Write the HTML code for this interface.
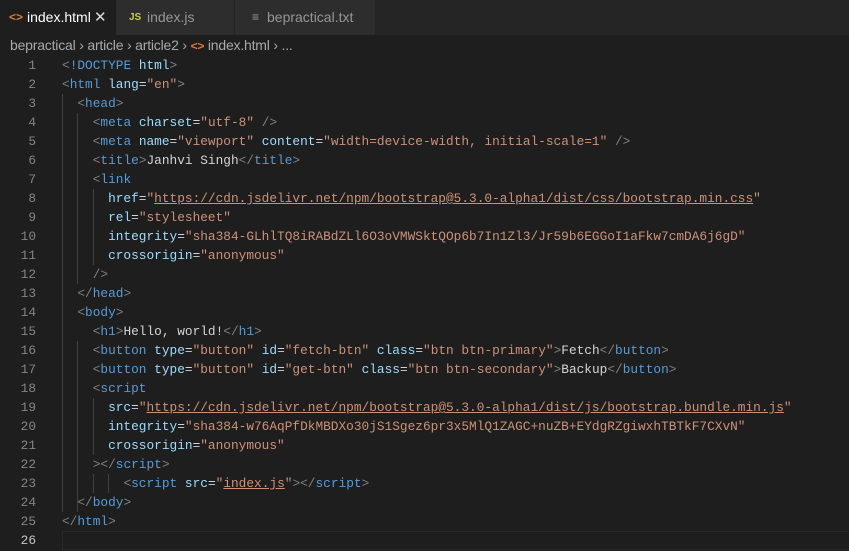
<!DOCTYPE html>
<html><head><style>
body{margin:0;width:849px;height:551px;background:#1e1e1e;overflow:hidden;font-family:"Liberation Sans",sans-serif;position:relative}
.tabs{position:absolute;left:0;top:0;width:849px;height:35px;background:#252526}
.tab{position:absolute;top:0;height:35px;line-height:35px;font-size:14px;color:#969696;background:#2d2d2d}
.bc{position:absolute;top:35px;left:10px;font-size:14px;color:#a9a9a9;line-height:20px;letter-spacing:-0.2px}
.code{position:absolute;left:0;top:56px;font-family:"Liberation Mono",monospace;font-size:12.8px}
.ln{position:absolute;left:0;width:36px;text-align:right;color:#858585;height:19px;line-height:19px}
.l{position:absolute;left:62px;white-space:pre;color:#d4d4d4;height:19px;line-height:19px}
.b{color:#808080}.t{color:#569cd6}.a{color:#9cdcfe}.s{color:#ce9178}.u{text-decoration:underline;text-decoration-color:#ce9178}
.g{position:absolute;width:1px;background:#404040}
</style></head><body>
<div class="tabs">
<div class="tab" style="left:0;width:116px;background:#1e1e1e;color:#fff"><span style="color:#e37933;position:absolute;left:9px;font-weight:bold;font-size:12px">&lt;&gt;</span><span style="position:absolute;left:27px">index.html</span><span style="position:absolute;left:94px;font-size:15px;color:#ddd">✕</span></div>
<div class="tab" style="left:116px;width:118px"><span style="color:#cbcb41;position:absolute;left:13px;font-weight:bold;font-size:10px">JS</span><span style="position:absolute;left:31px">index.js</span></div>
<div class="tab" style="left:235px;width:140px"><span style="color:#9a9a9a;position:absolute;left:17px;font-size:12px">≡</span><span style="position:absolute;left:32px">bepractical.txt</span></div>
</div>
<div class="bc">bepractical <span>›</span> article <span>›</span> article2 <span>›</span> <span style="color:#e37933;font-weight:bold;font-size:12px">&lt;&gt;</span> index.html <span>›</span> ...</div>
<div class="code">
<div style="position:absolute;left:62px;top:475px;width:787px;height:17px;border:1px solid #282828"></div>
<div class="g" style="left:62px;top:38px;height:418px"></div>
<div class="g" style="left:77px;top:57px;height:171px"></div>
<div class="g" style="left:77px;top:285px;height:171px"></div>
<div class="g" style="left:93px;top:133px;height:76px"></div>
<div class="g" style="left:93px;top:342px;height:57px"></div>
<div class="g" style="left:93px;top:418px;height:19px"></div>
<div class="g" style="left:108px;top:418px;height:19px"></div>
<div class="ln" style="top:0">1</div><div class="l" style="top:0"><span class="b">&lt;</span><span class="t">!DOCTYPE</span> <span class="a">html</span><span class="b">&gt;</span></div>
<div class="ln" style="top:19px">2</div><div class="l" style="top:19px"><span class="b">&lt;</span><span class="t">html</span> <span class="a">lang</span>=<span class="s">"en"</span><span class="b">&gt;</span></div>
<div class="ln" style="top:38px">3</div><div class="l" style="top:38px">  <span class="b">&lt;</span><span class="t">head</span><span class="b">&gt;</span></div>
<div class="ln" style="top:57px">4</div><div class="l" style="top:57px">    <span class="b">&lt;</span><span class="t">meta</span> <span class="a">charset</span>=<span class="s">"utf-8"</span> <span class="b">/&gt;</span></div>
<div class="ln" style="top:76px">5</div><div class="l" style="top:76px">    <span class="b">&lt;</span><span class="t">meta</span> <span class="a">name</span>=<span class="s">"viewport"</span> <span class="a">content</span>=<span class="s">"width=device-width, initial-scale=1"</span> <span class="b">/&gt;</span></div>
<div class="ln" style="top:95px">6</div><div class="l" style="top:95px">    <span class="b">&lt;</span><span class="t">title</span><span class="b">&gt;</span>Janhvi Singh<span class="b">&lt;/</span><span class="t">title</span><span class="b">&gt;</span></div>
<div class="ln" style="top:114px">7</div><div class="l" style="top:114px">    <span class="b">&lt;</span><span class="t">link</span></div>
<div class="ln" style="top:133px">8</div><div class="l" style="top:133px">      <span class="a">href</span>=<span class="s">"<span class="u">https://cdn.jsdelivr.net/npm/bootstrap@5.3.0-alpha1/dist/css/bootstrap.min.css</span>"</span></div>
<div class="ln" style="top:152px">9</div><div class="l" style="top:152px">      <span class="a">rel</span>=<span class="s">"stylesheet"</span></div>
<div class="ln" style="top:171px">10</div><div class="l" style="top:171px">      <span class="a">integrity</span>=<span class="s">"sha384-GLhlTQ8iRABdZLl6O3oVMWSktQOp6b7In1Zl3/Jr59b6EGGoI1aFkw7cmDA6j6gD"</span></div>
<div class="ln" style="top:190px">11</div><div class="l" style="top:190px">      <span class="a">crossorigin</span>=<span class="s">"anonymous"</span></div>
<div class="ln" style="top:209px">12</div><div class="l" style="top:209px">    <span class="b">/&gt;</span></div>
<div class="ln" style="top:228px">13</div><div class="l" style="top:228px">  <span class="b">&lt;/</span><span class="t">head</span><span class="b">&gt;</span></div>
<div class="ln" style="top:247px">14</div><div class="l" style="top:247px">  <span class="b">&lt;</span><span class="t">body</span><span class="b">&gt;</span></div>
<div class="ln" style="top:266px">15</div><div class="l" style="top:266px">    <span class="b">&lt;</span><span class="t">h1</span><span class="b">&gt;</span>Hello, world!<span class="b">&lt;/</span><span class="t">h1</span><span class="b">&gt;</span></div>
<div class="ln" style="top:285px">16</div><div class="l" style="top:285px">    <span class="b">&lt;</span><span class="t">button</span> <span class="a">type</span>=<span class="s">"button"</span> <span class="a">id</span>=<span class="s">"fetch-btn"</span> <span class="a">class</span>=<span class="s">"btn btn-primary"</span><span class="b">&gt;</span>Fetch<span class="b">&lt;/</span><span class="t">button</span><span class="b">&gt;</span></div>
<div class="ln" style="top:304px">17</div><div class="l" style="top:304px">    <span class="b">&lt;</span><span class="t">button</span> <span class="a">type</span>=<span class="s">"button"</span> <span class="a">id</span>=<span class="s">"get-btn"</span> <span class="a">class</span>=<span class="s">"btn btn-secondary"</span><span class="b">&gt;</span>Backup<span class="b">&lt;/</span><span class="t">button</span><span class="b">&gt;</span></div>
<div class="ln" style="top:323px">18</div><div class="l" style="top:323px">    <span class="b">&lt;</span><span class="t">script</span></div>
<div class="ln" style="top:342px">19</div><div class="l" style="top:342px">      <span class="a">src</span>=<span class="s">"<span class="u">https://cdn.jsdelivr.net/npm/bootstrap@5.3.0-alpha1/dist/js/bootstrap.bundle.min.js</span>"</span></div>
<div class="ln" style="top:361px">20</div><div class="l" style="top:361px">      <span class="a">integrity</span>=<span class="s">"sha384-w76AqPfDkMBDXo30jS1Sgez6pr3x5MlQ1ZAGC+nuZB+EYdgRZgiwxhTBTkF7CXvN"</span></div>
<div class="ln" style="top:380px">21</div><div class="l" style="top:380px">      <span class="a">crossorigin</span>=<span class="s">"anonymous"</span></div>
<div class="ln" style="top:399px">22</div><div class="l" style="top:399px">    <span class="b">&gt;&lt;/</span><span class="t">script</span><span class="b">&gt;</span></div>
<div class="ln" style="top:418px">23</div><div class="l" style="top:418px">        <span class="b">&lt;</span><span class="t">script</span> <span class="a">src</span>=<span class="s">"<span class="u">index.js</span>"</span><span class="b">&gt;&lt;/</span><span class="t">script</span><span class="b">&gt;</span></div>
<div class="ln" style="top:437px">24</div><div class="l" style="top:437px">  <span class="b">&lt;/</span><span class="t">body</span><span class="b">&gt;</span></div>
<div class="ln" style="top:456px">25</div><div class="l" style="top:456px"><span class="b">&lt;/</span><span class="t">html</span><span class="b">&gt;</span></div>
<div class="ln" style="top:475px;color:#c6c6c6">26</div>
</div>
</body></html>
